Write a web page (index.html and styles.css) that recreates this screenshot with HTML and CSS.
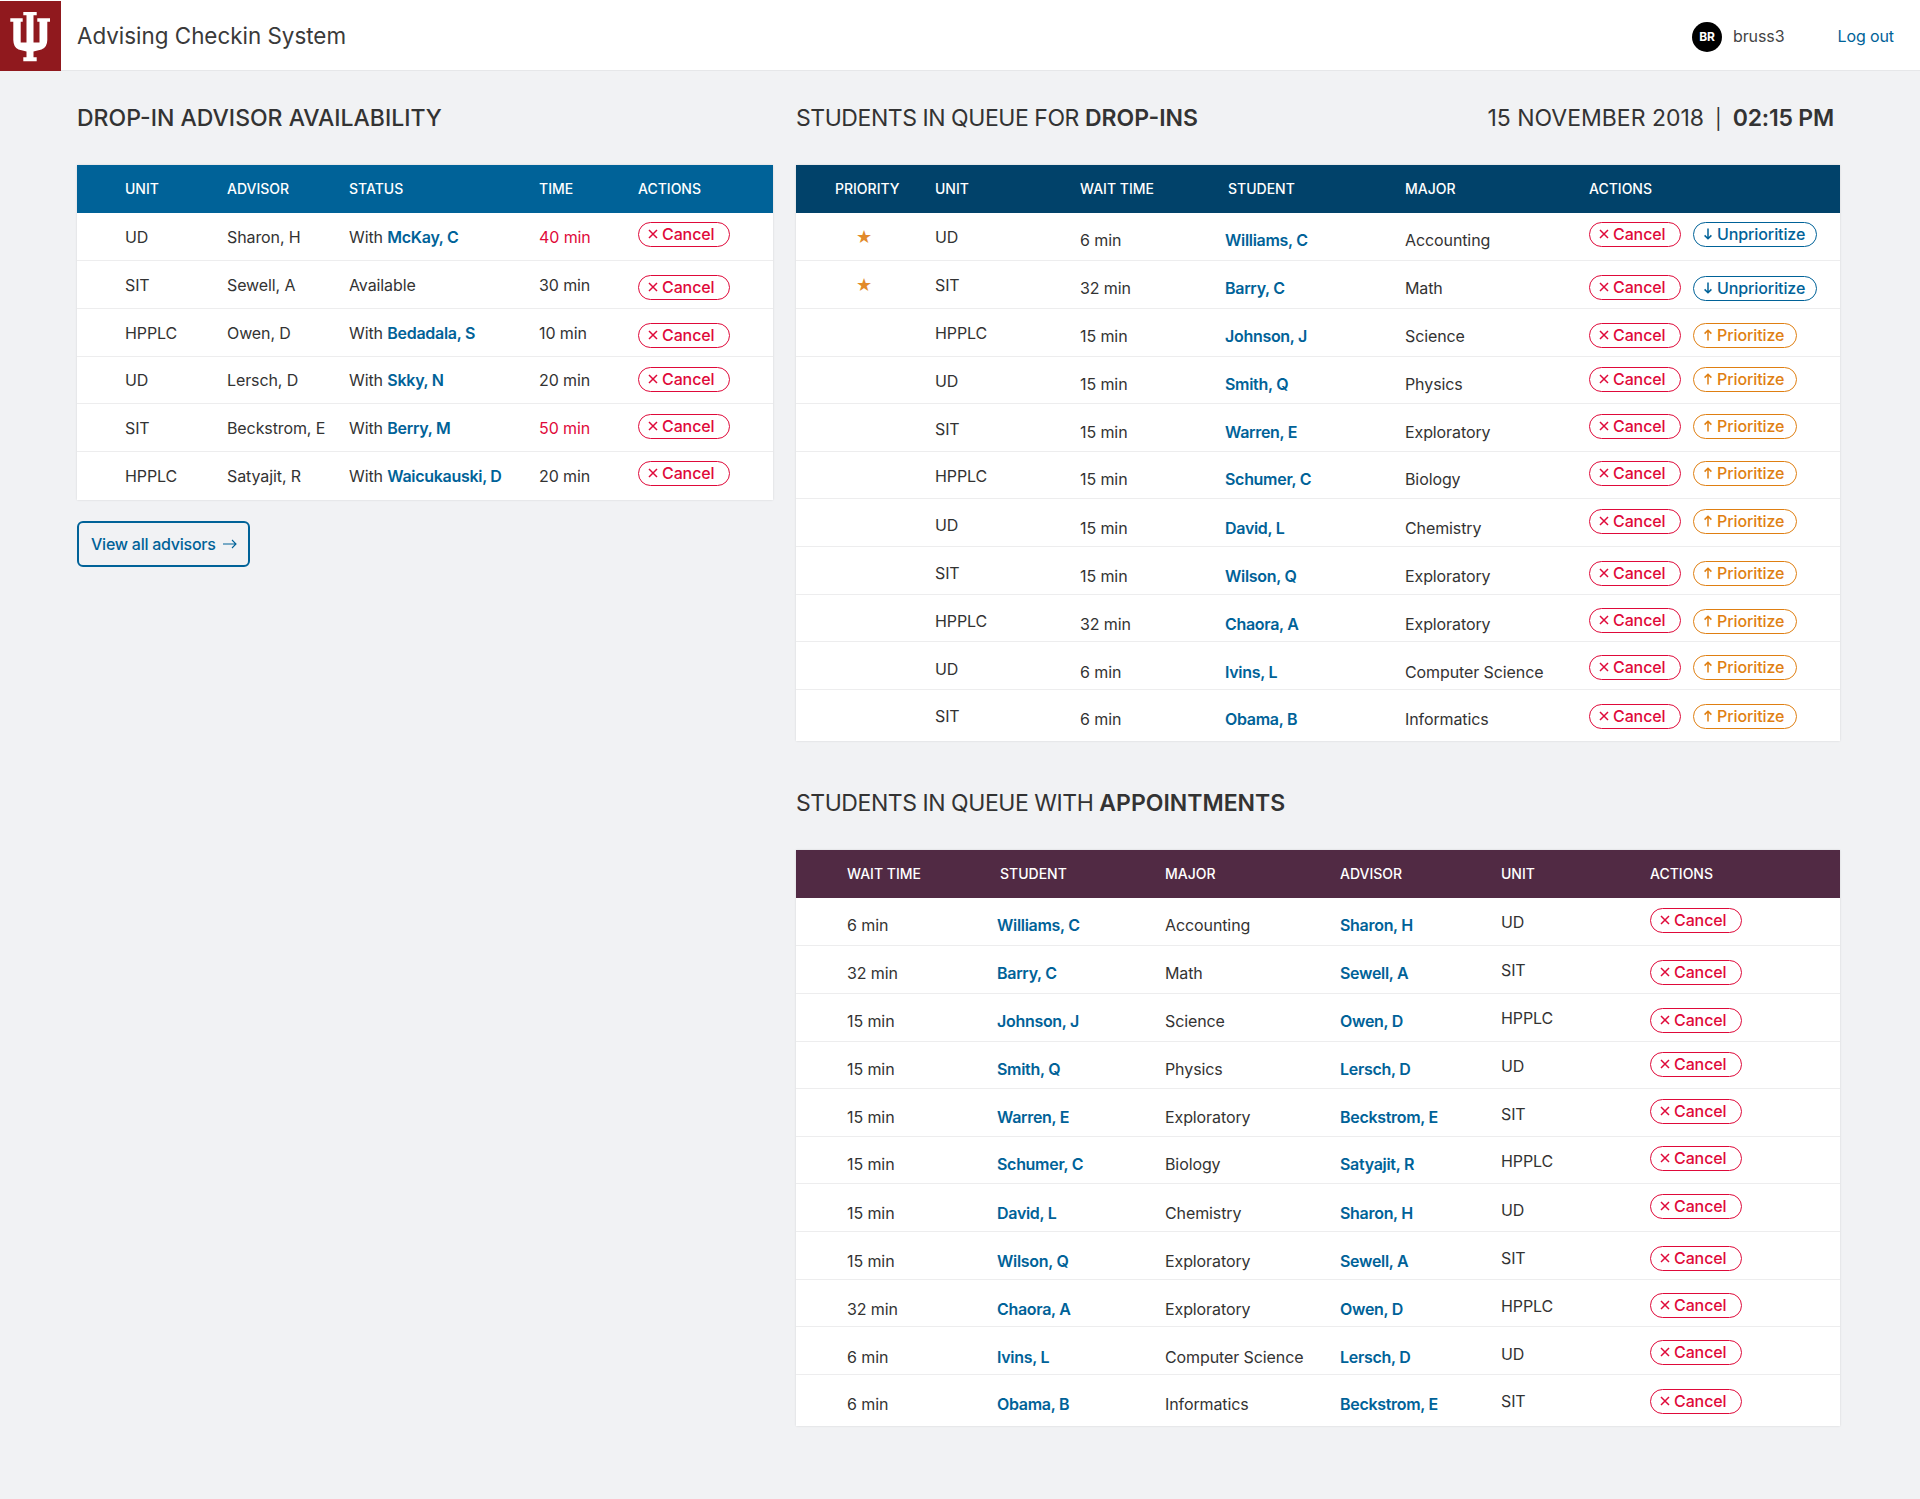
FILE: index.html
```html
<!DOCTYPE html>
<html lang="en">

<head>
  <meta charset="UTF-8">
  <meta name="viewport" content="width=device-width, initial-scale=1">
  <title>Advising Checkin System</title>
  <link rel="stylesheet" href="styles.css">
</head>

<body>
  <svg class="sprites" aria-hidden="true">
    <symbol id="i_x" viewBox="0 0 10 10"><path d="M1 1l8 8M9 1l-8 8" fill="none" stroke="currentColor" stroke-width="1.5" /></symbol>
    <symbol id="i_up" viewBox="0 0 10 12"><path d="M5 11.5V1.2M1.6 4.6L5 1.2l3.4 3.4" fill="none" stroke="currentColor" stroke-width="1.5" /></symbol>
    <symbol id="i_down" viewBox="0 0 10 12"><path d="M5 .5v10.3M1.6 7.4L5 10.8l3.4-3.4" fill="none" stroke="currentColor" stroke-width="1.5" /></symbol>
  </svg>

  <header class="top_bar">
    <div class="logo">
      <svg width="61" height="70" viewBox="0 0 61 70">
        <path fill="#fff" d="M23.3 11H36.7V14.2H33.5V41.5H39.5V20.7H37.3V17.3H50V20.7H47.3V39Q47.2 46.5 41.5 48.5L33.5 50.5V56.2H36.7V60.3H23.3V56.2H26.5V50.5L18.5 48.5Q13.5 46.5 13.3 39V20.7H10.3V17.3H22.7V20.7H20.7V41.5H26.5V14.2H23.3Z" />
      </svg>
    </div>
    <div class="app_title">Advising Checkin System</div>
    <div class="user_box">
      <span class="avatar">BR</span>
      <span class="user_name">bruss3</span>
      <a class="logout" href="#">Log out</a>
    </div>
  </header>

  <main class="page_grid">
    <section>
      <h2 class="section_title strong">DROP-IN ADVISOR AVAILABILITY</h2>
      <table class="data_table">
        <colgroup>
          <col class="w150"><col class="w122"><col class="w190"><col class="w99"><col class="w135">
        </colgroup>
        <thead class="head_blue">
          <tr><th class="first48">UNIT</th><th>ADVISOR</th><th>STATUS</th><th>TIME</th><th>ACTIONS</th></tr>
        </thead>
        <tbody>
          <tr><td class="first48">UD</td><td>Sharon, H</td><td>With <a href="#">McKay, C</a></td><td class="late">40 min</td><td class="act pad9"><button class="pill cancel"><svg class="ic_x"><use href="#i_x" /></svg>Cancel</button></td></tr>
          <tr><td class="first48">SIT</td><td>Sewell, A</td><td>Available</td><td>30 min</td><td class="act pad14"><button class="pill cancel"><svg class="ic_x"><use href="#i_x" /></svg>Cancel</button></td></tr>
          <tr><td class="first48">HPPLC</td><td>Owen, D</td><td>With <a href="#">Bedadala, S</a></td><td>10 min</td><td class="act pad14"><button class="pill cancel"><svg class="ic_x"><use href="#i_x" /></svg>Cancel</button></td></tr>
          <tr class="short"><td class="first48">UD</td><td>Lersch, D</td><td>With <a href="#">Skky, N</a></td><td>20 min</td><td class="act pad10"><button class="pill cancel"><svg class="ic_x"><use href="#i_x" /></svg>Cancel</button></td></tr>
          <tr><td class="first48">SIT</td><td>Beckstrom, E</td><td>With <a href="#">Berry, M</a></td><td class="late">50 min</td><td class="act pad10"><button class="pill cancel"><svg class="ic_x"><use href="#i_x" /></svg>Cancel</button></td></tr>
          <tr><td class="first48">HPPLC</td><td>Satyajit, R</td><td>With <a href="#">Waicukauski, D</a></td><td>20 min</td><td class="act pad9"><button class="pill cancel"><svg class="ic_x"><use href="#i_x" /></svg>Cancel</button></td></tr>
        </tbody>
      </table>
      <a class="view_all" href="#">View all advisors
        <svg width="14" height="10" viewBox="0 0 14 10"><path d="M0 5h13M9 1l4 4-4 4" fill="none" stroke="currentColor" stroke-width="1.1" /></svg>
      </a>
    </section>

    <section>
      <div class="title_row">
        <h2 class="section_title">STUDENTS IN QUEUE FOR <b>DROP-INS</b></h2>
        <div class="section_title clock">15 NOVEMBER 2018<span class="sep">|</span><b>02:15 PM</b></div>
      </div>
      <table class="data_table">
        <colgroup>
          <col class="w139"><col class="w145"><col class="w145"><col class="w180"><col class="w184"><col class="w251">
        </colgroup>
        <thead class="head_navy">
          <tr><th class="first39">PRIORITY</th><th>UNIT</th><th>WAIT TIME</th><th class="name_th">STUDENT</th><th>MAJOR</th><th>ACTIONS</th></tr>
        </thead>
        <tbody>
          <tr><td class="star_cell"><span class="star">★</span></td><td>UD</td><td class="low">6 min</td><td class="low"><a href="#">Williams, C</a></td><td class="low">Accounting</td><td class="act pad9"><div class="pills"><button class="pill cancel"><svg class="ic_x"><use href="#i_x" /></svg>Cancel</button><button class="pill unprio"><svg class="ic_arrow"><use href="#i_down" /></svg>Unprioritize</button></div></td></tr>
          <tr><td class="star_cell"><span class="star">★</span></td><td>SIT</td><td class="low">32 min</td><td class="low"><a href="#">Barry, C</a></td><td class="low">Math</td><td class="act pad14"><div class="pills"><button class="pill cancel"><svg class="ic_x"><use href="#i_x" /></svg>Cancel</button><button class="pill unprio nudge"><svg class="ic_arrow"><use href="#i_down" /></svg>Unprioritize</button></div></td></tr>
          <tr><td></td><td>HPPLC</td><td class="low">15 min</td><td class="low"><a href="#">Johnson, J</a></td><td class="low">Science</td><td class="act pad14"><div class="pills"><button class="pill cancel"><svg class="ic_x"><use href="#i_x" /></svg>Cancel</button><button class="pill prio"><svg class="ic_arrow"><use href="#i_up" /></svg>Prioritize</button></div></td></tr>
          <tr class="short bump"><td></td><td>UD</td><td class="low">15 min</td><td class="low"><a href="#">Smith, Q</a></td><td class="low">Physics</td><td class="act pad10"><div class="pills"><button class="pill cancel"><svg class="ic_x"><use href="#i_x" /></svg>Cancel</button><button class="pill prio"><svg class="ic_arrow"><use href="#i_up" /></svg>Prioritize</button></div></td></tr>
          <tr class="bump"><td></td><td>SIT</td><td class="low">15 min</td><td class="low"><a href="#">Warren, E</a></td><td class="low">Exploratory</td><td class="act pad10"><div class="pills"><button class="pill cancel"><svg class="ic_x"><use href="#i_x" /></svg>Cancel</button><button class="pill prio"><svg class="ic_arrow"><use href="#i_up" /></svg>Prioritize</button></div></td></tr>
          <tr class="short bump"><td></td><td>HPPLC</td><td class="low">15 min</td><td class="low"><a href="#">Schumer, C</a></td><td class="low">Biology</td><td class="act pad9"><div class="pills"><button class="pill cancel"><svg class="ic_x"><use href="#i_x" /></svg>Cancel</button><button class="pill prio"><svg class="ic_arrow"><use href="#i_up" /></svg>Prioritize</button></div></td></tr>
          <tr class="shift"><td></td><td>UD</td><td class="low">15 min</td><td class="low"><a href="#">David, L</a></td><td class="low">Chemistry</td><td class="act pad10"><div class="pills"><button class="pill cancel"><svg class="ic_x"><use href="#i_x" /></svg>Cancel</button><button class="pill prio"><svg class="ic_arrow"><use href="#i_up" /></svg>Prioritize</button></div></td></tr>
          <tr class="shift"><td></td><td>SIT</td><td class="low">15 min</td><td class="low"><a href="#">Wilson, Q</a></td><td class="low">Exploratory</td><td class="act pad14"><div class="pills"><button class="pill cancel"><svg class="ic_x"><use href="#i_x" /></svg>Cancel</button><button class="pill prio"><svg class="ic_arrow"><use href="#i_up" /></svg>Prioritize</button></div></td></tr>
          <tr class="short shift bump"><td></td><td>HPPLC</td><td class="low">32 min</td><td class="low"><a href="#">Chaora, A</a></td><td class="low">Exploratory</td><td class="act pad13"><div class="pills"><button class="pill cancel"><svg class="ic_x"><use href="#i_x" /></svg>Cancel</button><button class="pill prio nudge"><svg class="ic_arrow"><use href="#i_up" /></svg>Prioritize</button></div></td></tr>
          <tr class="shift bump"><td></td><td>UD</td><td class="low">6 min</td><td class="low"><a href="#">Ivins, L</a></td><td class="low">Computer Science</td><td class="act pad13"><div class="pills"><button class="pill cancel"><svg class="ic_x"><use href="#i_x" /></svg>Cancel</button><button class="pill prio"><svg class="ic_arrow"><use href="#i_up" /></svg>Prioritize</button></div></td></tr>
          <tr class="tall"><td></td><td>SIT</td><td class="low">6 min</td><td class="low"><a href="#">Obama, B</a></td><td class="low">Informatics</td><td class="act pad14"><div class="pills"><button class="pill cancel"><svg class="ic_x"><use href="#i_x" /></svg>Cancel</button><button class="pill prio"><svg class="ic_arrow"><use href="#i_up" /></svg>Prioritize</button></div></td></tr>
        </tbody>
      </table>

      <h2 class="section_title second">STUDENTS IN QUEUE WITH <b>APPOINTMENTS</b></h2>
      <table class="data_table">
        <colgroup>
          <col class="w201"><col class="w168"><col class="w175"><col class="w161"><col class="w149"><col class="w190">
        </colgroup>
        <thead class="head_plum">
          <tr><th class="first51">WAIT TIME</th><th class="name_th">STUDENT</th><th>MAJOR</th><th>ADVISOR</th><th>UNIT</th><th>ACTIONS</th></tr>
        </thead>
        <tbody>
          <tr><td class="first51 low">6 min</td><td class="low"><a href="#">Williams, C</a></td><td class="low">Accounting</td><td class="low"><a href="#">Sharon, H</a></td><td>UD</td><td class="act pad10"><button class="pill cancel"><svg class="ic_x"><use href="#i_x" /></svg>Cancel</button></td></tr>
          <tr><td class="first51 low">32 min</td><td class="low"><a href="#">Barry, C</a></td><td class="low">Math</td><td class="low"><a href="#">Sewell, A</a></td><td>SIT</td><td class="act pad14"><button class="pill cancel"><svg class="ic_x"><use href="#i_x" /></svg>Cancel</button></td></tr>
          <tr><td class="first51 low">15 min</td><td class="low"><a href="#">Johnson, J</a></td><td class="low">Science</td><td class="low"><a href="#">Owen, D</a></td><td>HPPLC</td><td class="act pad14"><button class="pill cancel"><svg class="ic_x"><use href="#i_x" /></svg>Cancel</button></td></tr>
          <tr class="short bump"><td class="first51 low">15 min</td><td class="low"><a href="#">Smith, Q</a></td><td class="low">Physics</td><td class="low"><a href="#">Lersch, D</a></td><td>UD</td><td class="act pad10"><button class="pill cancel"><svg class="ic_x"><use href="#i_x" /></svg>Cancel</button></td></tr>
          <tr class="bump"><td class="first51 low">15 min</td><td class="low"><a href="#">Warren, E</a></td><td class="low">Exploratory</td><td class="low"><a href="#">Beckstrom, E</a></td><td>SIT</td><td class="act pad10"><button class="pill cancel"><svg class="ic_x"><use href="#i_x" /></svg>Cancel</button></td></tr>
          <tr class="short bump"><td class="first51 low">15 min</td><td class="low"><a href="#">Schumer, C</a></td><td class="low">Biology</td><td class="low"><a href="#">Satyajit, R</a></td><td>HPPLC</td><td class="act pad9"><button class="pill cancel"><svg class="ic_x"><use href="#i_x" /></svg>Cancel</button></td></tr>
          <tr class="shift"><td class="first51 low">15 min</td><td class="low"><a href="#">David, L</a></td><td class="low">Chemistry</td><td class="low"><a href="#">Sharon, H</a></td><td>UD</td><td class="act pad10"><button class="pill cancel"><svg class="ic_x"><use href="#i_x" /></svg>Cancel</button></td></tr>
          <tr class="shift"><td class="first51 low">15 min</td><td class="low"><a href="#">Wilson, Q</a></td><td class="low">Exploratory</td><td class="low"><a href="#">Sewell, A</a></td><td>SIT</td><td class="act pad14"><button class="pill cancel"><svg class="ic_x"><use href="#i_x" /></svg>Cancel</button></td></tr>
          <tr class="short shift bump"><td class="first51 low">32 min</td><td class="low"><a href="#">Chaora, A</a></td><td class="low">Exploratory</td><td class="low"><a href="#">Owen, D</a></td><td>HPPLC</td><td class="act pad13"><button class="pill cancel"><svg class="ic_x"><use href="#i_x" /></svg>Cancel</button></td></tr>
          <tr class="shift bump"><td class="first51 low">6 min</td><td class="low"><a href="#">Ivins, L</a></td><td class="low">Computer Science</td><td class="low"><a href="#">Lersch, D</a></td><td>UD</td><td class="act pad13"><button class="pill cancel"><svg class="ic_x"><use href="#i_x" /></svg>Cancel</button></td></tr>
          <tr class="tall"><td class="first51 low">6 min</td><td class="low"><a href="#">Obama, B</a></td><td class="low">Informatics</td><td class="low"><a href="#">Beckstrom, E</a></td><td>SIT</td><td class="act pad14"><button class="pill cancel"><svg class="ic_x"><use href="#i_x" /></svg>Cancel</button></td></tr>
        </tbody>
      </table>
    </section>
  </main>
</body>

</html>
```
FILE: styles.css
```css
* {
  box-sizing: border-box;
}

body {
  margin: 0;
  background: #f1f2f4;
  color: #333;
  font-family: Inter, "Liberation Sans", sans-serif;
  font-size: 16px;
  line-height: 24px;
}

a {
  color: #006298;
  text-decoration: none;
}

.sprites {
  display: none;
}

.top_bar {
  display: flex;
  align-items: center;
  height: 71px;
  background: #fff;
  border-bottom: 1px solid #e6e7e9;
}

.logo {
  width: 61px;
  height: 70px;
  margin-bottom: -1px;
  background: #90191e;
}

.logo svg {
  display: block;
}

.app_title {
  margin-left: 16px;
  padding-top: 2px;
  font-size: 22.4px;
  color: #3a3a3a;
}

.user_box {
  display: flex;
  align-items: center;
  margin-left: auto;
  padding-top: 2px;
  padding-right: 26px;
  letter-spacing: -.1px;
}

.avatar {
  width: 30px;
  height: 30px;
  margin-top: 2px;
  border-radius: 50%;
  background: #000;
  color: #fff;
  font-size: 12px;
  font-weight: 700;
  line-height: 30px;
  text-align: center;
}

.user_name {
  margin-left: 11px;
  color: #444;
}

.logout {
  margin-left: 53px;
}

.page_grid {
  display: grid;
  grid-template-columns: 696px 1044px;
  gap: 23px;
  padding: 32px 0 73px 77px;
}

.section_title {
  margin: 0 0 32px;
  font-size: 23px;
  font-weight: 400;
  line-height: 30px;
  letter-spacing: -.45px;
  color: #333;
}

.section_title b {
  font-weight: 600;
  letter-spacing: 0;
}

.section_title.strong {
  font-weight: 500;
  letter-spacing: 0;
}

.section_title.second {
  margin-top: 47px;
  margin-bottom: 32px;
}

.title_row {
  display: flex;
  justify-content: space-between;
}

.clock {
  padding-right: 6px;
  letter-spacing: 0;
}

.clock b {
  letter-spacing: -.2px;
}

.sep {
  margin: 0 11px;
  font-size: 20px;
  line-height: 1;
}

.data_table {
  width: 100%;
  table-layout: fixed;
  border-collapse: separate;
  border-spacing: 0;
  background: #fff;
  box-shadow: 0 0 2px rgba(0, 0, 0, .12);
}

.data_table th {
  height: 48px;
  padding: 0;
  color: #fff;
  font-size: 14px;
  font-weight: 500;
  text-align: left;
}

.head_blue th { background: #006298; }
.head_navy th { background: #01426a; }
.head_plum th { background: #512a44; }

.data_table td {
  height: 48px;
  padding: 0;
  border-bottom: 1px solid #ededee;
  vertical-align: middle;
  white-space: nowrap;
  letter-spacing: -.1px;
}

.data_table td a {
  font-weight: 600;
  letter-spacing: -.3px;
}

.data_table tr:last-child td {
  border-bottom: 0;
}

.data_table .short td { height: 47px; }
.data_table .tall td { height: 51px; }

/* text sits a little off centre in some rows of the reference */
.data_table td.low { padding-top: 6px; }
.data_table .bump td { padding-top: 2px; }
.data_table .bump td.low { padding-top: 8px; }
.data_table .shift td { padding-top: 4px; }
.data_table .shift td.low { padding-top: 10px; }
.data_table .shift.bump td { padding-top: 6px; }
.data_table .shift.bump td.low { padding-top: 12px; }

.first48 { padding-left: 48px !important; }
.first39 { padding-left: 39px !important; }
.first51 { padding-left: 51px !important; }
.name_th { padding-left: 3px !important; }

.w99 { width: 99px; }
.w122 { width: 122px; }
.w135 { width: 135px; }
.w139 { width: 139px; }
.w145 { width: 145px; }
.w149 { width: 149px; }
.w150 { width: 150px; }
.w161 { width: 161px; }
.w168 { width: 168px; }
.w175 { width: 175px; }
.w180 { width: 180px; }
.w184 { width: 184px; }
.w190 { width: 190px; }
.w201 { width: 201px; }
.w251 { width: 251px; }

.late {
  color: #df0a3a;
}

.star_cell {
  padding-left: 60px !important;
}

.star {
  color: #e28a2b;
  font-family: "DejaVu Sans", sans-serif;
  font-size: 18px;
}

.data_table td.act {
  vertical-align: top;
}

.data_table tr td.act.pad9 { padding-top: 9px; }
.data_table tr td.act.pad10 { padding-top: 10px; }
.data_table tr td.act.pad13 { padding-top: 13px; }
.data_table tr td.act.pad14 { padding-top: 14px; }

.pills {
  display: flex;
  align-items: flex-start;
  gap: 12px;
}

.pill {
  display: inline-flex;
  align-items: center;
  height: 25px;
  padding: 0 0 2px 9px;
  border: 1.5px solid;
  border-radius: 13px;
  background: #fff;
  font-family: inherit;
  font-size: 16px;
  font-weight: 500;
  letter-spacing: -.1px;
  vertical-align: top;
}

.cancel { width: 92px; color: #df0a3a; }
.unprio { width: 124px; color: #006298; }
.prio { width: 104px; color: #df7f12; }
.nudge { margin-top: 1px; }

.ic_x {
  width: 10px;
  height: 10px;
  margin-right: 4px;
}

.ic_arrow {
  width: 10px;
  height: 12px;
  margin-right: 4px;
}

.view_all {
  display: inline-flex;
  align-items: center;
  gap: 7px;
  height: 46px;
  margin-top: 21px;
  padding: 0 11px 0 12px;
  border: 2px solid #006298;
  border-radius: 6px;
  font-weight: 500;
  letter-spacing: -.25px;
}
```
